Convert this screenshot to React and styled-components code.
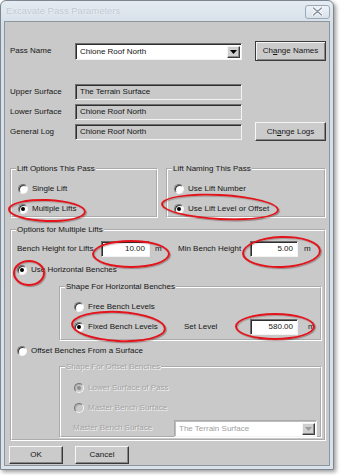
import React from 'react';
import styled, { createGlobalStyle } from 'styled-components';

const Global = createGlobalStyle`
  html, body { margin: 0; padding: 0; background: #ffffff; }
  body {
    font-family: "Liberation Sans", Arial, sans-serif;
    font-size: 8px;
    line-height: 10px;
    color: #161616;
  }
`;

const Stage = styled.div`
  position: relative;
  width: 342px;
  height: 475px;
  overflow: hidden;
`;

const Window = styled.div`
  width: 334px;
  height: 470px;
  box-sizing: border-box;
  border: 1px solid #7d858e;
  border-radius: 6px 6px 0 0;
  background: linear-gradient(#e4ebf2, #d6dfe8 24px, #d9e1ea);
  box-shadow: 2px 2px 4px rgba(0, 0, 0, 0.4);
  display: flex;
  flex-direction: column;
  padding: 0 3px 3px 3px;
`;

const TitleBar = styled.div`
  height: 20px;
  flex: none;
  display: flex;
  align-items: center;
  justify-content: space-between;
  padding-left: 2px;
`;

const TitleText = styled.span`
  font-size: 9.4px;
  color: #c0c9d2;
  text-shadow: 0 0 2px #f4f8fb;
  letter-spacing: 0.05px;
`;

const CloseButton = styled.span`
  width: 25px;
  height: 14px;
  box-sizing: border-box;
  margin-top: 1px;
  border: 1px solid #9ba8b6;
  border-radius: 3px;
  background: linear-gradient(#edf2f7, #d8e1ea);
  display: flex;
  align-items: center;
  justify-content: center;
`;

const Client = styled.div`
  flex: 1;
  background: #c9c9c9;
  border: 1px solid #8d959e;
  padding: 19px 3px 0 5px;
  display: flex;
  flex-direction: column;
`;

const Row = styled.div`
  display: flex;
  align-items: center;
  height: ${(p) => p.$h}px;
  margin-top: ${(p) => p.$mt || 0}px;
  margin-left: ${(p) => p.$ml || 0}px;
  flex: none;
`;

const Stack = styled.div`
  display: flex;
  flex-direction: column;
  gap: ${(p) => p.$gap}px;
  margin-top: ${(p) => p.$mt || 0}px;
`;

const Label = styled.span`
  width: ${(p) => p.$w}px;
  flex: none;
  white-space: nowrap;
  color: ${(p) => (p.$disabled ? '#a4a4a4' : '#161616')};
  text-shadow: ${(p) => (p.$disabled ? '1px 1px 0 #f2f2f2' : 'none')};
`;

const Sunken = styled.div`
  width: ${(p) => p.$w}px;
  height: ${(p) => p.$h}px;
  box-sizing: border-box;
  flex: none;
  border: 1px solid;
  border-color: #6e6e6e #f3f3f3 #f3f3f3 #6e6e6e;
  box-shadow: inset 1px 1px 0 #2e2e2e;
  background: ${(p) => (p.$readonly ? '#c9c9c9' : '#ffffff')};
  display: flex;
  align-items: center;
  justify-content: ${(p) => (p.$right ? 'flex-end' : 'flex-start')};
  padding: ${(p) => (p.$right ? '0 4px 0 0' : '0 0 0 4px')};
  white-space: nowrap;
`;

const ComboBox = styled.div`
  width: ${(p) => p.$w}px;
  height: ${(p) => p.$h}px;
  box-sizing: border-box;
  flex: none;
  border: 1px solid;
  border-color: ${(p) =>
    p.$disabled ? '#a9a9a9 #f3f3f3 #f3f3f3 #a9a9a9' : '#6e6e6e #f3f3f3 #f3f3f3 #6e6e6e'};
  box-shadow: ${(p) => (p.$disabled ? 'inset 1px 1px 0 #bdbdbd' : 'inset 1px 1px 0 #2e2e2e')};
  background: #ffffff;
  display: flex;
  align-items: stretch;
  padding: 2px 1px 1px 2px;
`;

const ComboText = styled.span`
  flex: 1;
  display: flex;
  align-items: center;
  padding-left: 2px;
  white-space: nowrap;
  color: ${(p) => (p.$disabled ? '#a0a0a0' : '#161616')};
`;

const DropButton = styled.span`
  width: 13px;
  flex: none;
  box-sizing: border-box;
  background: #cfcfcf;
  border: 1px solid;
  border-color: #f4f4f4 #3c3c3c #3c3c3c #f4f4f4;
  box-shadow: inset -1px -1px 0 #8c8c8c;
  display: flex;
  align-items: center;
  justify-content: center;
`;

const Button = styled.button`
  font: inherit;
  color: #161616;
  width: ${(p) => p.$w}px;
  height: ${(p) => p.$h}px;
  margin: ${(p) => p.$margin || '0'};
  padding: 0;
  flex: none;
  box-sizing: border-box;
  background: #cbcbcb;
  border: 1px solid;
  border-color: ${(p) => (p.$default ? '#3a3a3a' : '#f6f6f6 #3a3a3a #3a3a3a #f6f6f6')};
  box-shadow: ${(p) =>
    p.$default
      ? 'inset 1px 1px 0 #f6f6f6, inset -1px -1px 0 #868686'
      : 'inset -1px -1px 0 #868686'};
  display: flex;
  align-items: center;
  justify-content: center;
`;

const Group = styled.fieldset`
  margin: 0;
  margin-top: ${(p) => p.$mt || 0}px;
  margin-left: ${(p) => p.$ml || 0}px;
  padding: 0;
  width: ${(p) => (p.$w ? `${p.$w}px` : 'auto')};
  box-sizing: border-box;
  min-inline-size: 0;
  border: 2px groove #ffffff;
  flex: none;
`;

const Legend = styled.legend`
  margin-left: 4px;
  padding: 0 1px;
  line-height: 10px;
  height: 10px;
  color: ${(p) => (p.$disabled ? '#a4a4a4' : '#161616')};
  text-shadow: ${(p) => (p.$disabled ? '1px 1px 0 #f2f2f2' : 'none')};
`;

const GroupBody = styled.div`
  display: flex;
  flex-direction: column;
  padding: ${(p) => p.$pad};
  gap: ${(p) => p.$gap || 0}px;
`;

const GroupRow = styled.div`
  display: flex;
  gap: 8px;
  margin-top: 25px;
`;

const RadioLine = styled.div`
  display: flex;
  align-items: center;
  height: ${(p) => p.$h || 14}px;
  gap: 4px;
  flex: none;
  margin-top: ${(p) => p.$mt || 0}px;
  white-space: nowrap;
  color: ${(p) => (p.$disabled ? '#a4a4a4' : '#161616')};
  text-shadow: ${(p) => (p.$disabled ? '1px 1px 0 #f2f2f2' : 'none')};
`;

const RadioWrap = styled.span`
  display: flex;
  align-items: center;
  gap: 4px;
  width: ${(p) => (p.$w ? `${p.$w}px` : 'auto')};
  flex: none;
`;

const RadioCircle = styled.span`
  position: relative;
  width: 10px;
  height: 10px;
  flex: none;
  box-sizing: border-box;
  border-radius: 50%;
  border: 1px solid;
  border-color: #777777 #f4f4f4 #f4f4f4 #777777;
  background: ${(p) => (p.$disabled ? '#c9c9c9' : '#ffffff')};
  box-shadow: inset 1px 1px 0 ${(p) => (p.$disabled ? '#a8a8a8' : '#3a3a3a')};
  &::after {
    content: '';
    display: ${(p) => (p.$checked ? 'block' : 'none')};
    position: absolute;
    left: 2px;
    top: 2px;
    width: 4px;
    height: 4px;
    border-radius: 50%;
    background: ${(p) => (p.$disabled ? '#8e8e8e' : '#000000')};
  }
`;

const Unit = styled.span`
  width: ${(p) => p.$w}px;
  margin-left: ${(p) => p.$ml}px;
  flex: none;
`;

const Underline = styled.span`
  text-decoration: underline;
`;

const Mark = styled.span`
  position: absolute;
  left: ${(p) => p.$x}px;
  top: ${(p) => p.$y}px;
  width: ${(p) => p.$w}px;
  height: ${(p) => p.$h}px;
  box-sizing: border-box;
  border: 2.5px solid #e3131b;
  border-radius: 50%;
  transform: rotate(${(p) => p.$rot || 0}deg);
  box-shadow: 1px 1px 1px rgba(60, 0, 0, 0.35), inset 1px 1px 1px rgba(60, 0, 0, 0.25);
  pointer-events: none;
`;

const Arrow = ({ disabled }) => (
  <svg width="7" height="4" viewBox="0 0 7 4">
    <polygon points="0,0 7,0 3.5,4" fill={disabled ? '#9a9a9a' : '#000'} />
  </svg>
);

const Radio = ({ children, checked, disabled, h, mt, w }) => (
  <RadioLine $h={h} $mt={mt} $disabled={disabled}>
    <RadioWrap $w={w}>
      <RadioCircle $checked={checked} $disabled={disabled} />
      <span>{children}</span>
    </RadioWrap>
  </RadioLine>
);

const marks = [
  { x: 8, y: 199, w: 78, h: 23, rot: 2 },
  { x: 161, y: 194, w: 118, h: 26, rot: 3 },
  { x: 92, y: 240, w: 78, h: 28, rot: 0 },
  { x: 242, y: 236, w: 79, h: 32, rot: -2 },
  { x: 13, y: 260, w: 32, h: 26, rot: 0 },
  { x: 71, y: 311, w: 95, h: 31, rot: 3 },
  { x: 235, y: 313, w: 80, h: 27, rot: 0 },
];

export default function App() {
  return (
    <Stage>
      <Global />
      <Window>
        <TitleBar>
          <TitleText>Excavate Pass Parameters</TitleText>
          <CloseButton>
            <svg width="11" height="9" viewBox="0 0 11 9">
              <path d="M1.5 1 L9.5 8 M9.5 1 L1.5 8" stroke="#ffffff" strokeWidth="3.2" strokeLinecap="round" />
              <path d="M1.5 1 L9.5 8 M9.5 1 L1.5 8" stroke="#8893a0" strokeWidth="1.6" strokeLinecap="round" />
            </svg>
          </CloseButton>
        </TitleBar>
        <Client>
          <Row $h={20}>
            <Label $w={65}>Pass Name</Label>
            <ComboBox $w={167} $h={17}>
              <ComboText>Chione Roof North</ComboText>
              <DropButton>
                <Arrow />
              </DropButton>
            </ComboBox>
            <Button $w={71} $h={20} $margin="0 0 0 13px" $default>
              Ch<Underline>a</Underline>nge Names
            </Button>
          </Row>

          <Stack $gap={5} $mt={23}>
            <Row $h={15}>
              <Label $w={65}>Upper Surface</Label>
              <Sunken $w={167} $h={16} $readonly>The Terrain Surface</Sunken>
            </Row>
            <Row $h={15}>
              <Label $w={65}>Lower Surface</Label>
              <Sunken $w={167} $h={16} $readonly>Chione Roof North</Sunken>
            </Row>
            <Row $h={15}>
              <Label $w={65}>General Log</Label>
              <Sunken $w={167} $h={16} $readonly>Chione Roof North</Sunken>
              <Button $w={71} $h={19} $margin="-2px 0 -2px 13px">
                Ch<Underline>a</Underline>nge Logs
              </Button>
            </Row>
          </Stack>

          <GroupRow>
            <Group $w={148}>
              <Legend>Lift Options This Pass</Legend>
              <GroupBody $pad="8px 0 0 6px" $gap={6}>
                <Radio>Single Lift</Radio>
                <Radio checked>Multiple Lifts</Radio>
              </GroupBody>
            </Group>
            <Group $w={160}>
              <Legend>Lift Naming This Pass</Legend>
              <GroupBody $pad="8px 0 0 6px" $gap={6}>
                <Radio>Use Lift Number</Radio>
                <Radio checked>Use Lift Level or Offset</Radio>
              </GroupBody>
            </Group>
          </GroupRow>

          <Group $mt={7}>
            <Legend>Options for Multiple Lifts</Legend>
            <GroupBody $pad="5px 4px 1px 5px">
              <Row $h={17}>
                <Label $w={84}>Bench Height for Lifts</Label>
                <Sunken $w={49} $h={16} $right>10.00</Sunken>
                <Unit $w={23} $ml={5}>m</Unit>
                <Label $w={72}>Min Bench Height</Label>
                <Sunken $w={48} $h={16} $right>5.00</Sunken>
                <Unit $w={10} $ml={6}>m</Unit>
              </Row>
              <Radio mt={6} checked>Use Horizontal Benches</Radio>

              <Group $mt={5} $ml={42} $w={263}>
                <Legend>Shape For Horizontal Benches</Legend>
                <GroupBody $pad="8px 0 4px 13px">
                  <Radio>Free Bench Levels</Radio>
                  <RadioLine $h={17} $mt={4}>
                    <RadioWrap $w={106}>
                      <RadioCircle $checked />
                      <span>Fixed Bench Levels</span>
                    </RadioWrap>
                    <Label $w={62}>Set Level</Label>
                    <Sunken $w={48} $h={16} $right>580.00</Sunken>
                    <Unit $w={10} $ml={6}>m</Unit>
                  </RadioLine>
                </GroupBody>
              </Group>

              <Radio mt={3}>Offset Benches From a Surface</Radio>

              <Group $mt={4} $ml={42} $w={263}>
                <Legend $disabled>Shape For Offset Benches</Legend>
                <GroupBody $pad="9px 0 0 13px">
                  <Radio checked disabled>Lower Surface of Pass</Radio>
                  <Radio mt={6} disabled>Master Bench Surface</Radio>
                  <Row $h={16} $mt={5} $ml={-1}>
                    <Label $w={101} $disabled>Master Bench Surface</Label>
                    <ComboBox $w={143} $h={17} $disabled>
                      <ComboText $disabled>The Terrain Surface</ComboText>
                      <DropButton>
                        <Arrow disabled />
                      </DropButton>
                    </ComboBox>
                  </Row>
                </GroupBody>
              </Group>
            </GroupBody>
          </Group>

          <Row $h={18} $mt={5} $ml={-1}>
            <Button $w={54} $h={18}>OK</Button>
            <Button $w={54} $h={18} $margin="0 0 0 12px">Cancel</Button>
          </Row>
        </Client>
      </Window>
      {marks.map((m, i) => (
        <Mark key={i} $x={m.x} $y={m.y} $w={m.w} $h={m.h} $rot={m.rot} />
      ))}
    </Stage>
  );
}
